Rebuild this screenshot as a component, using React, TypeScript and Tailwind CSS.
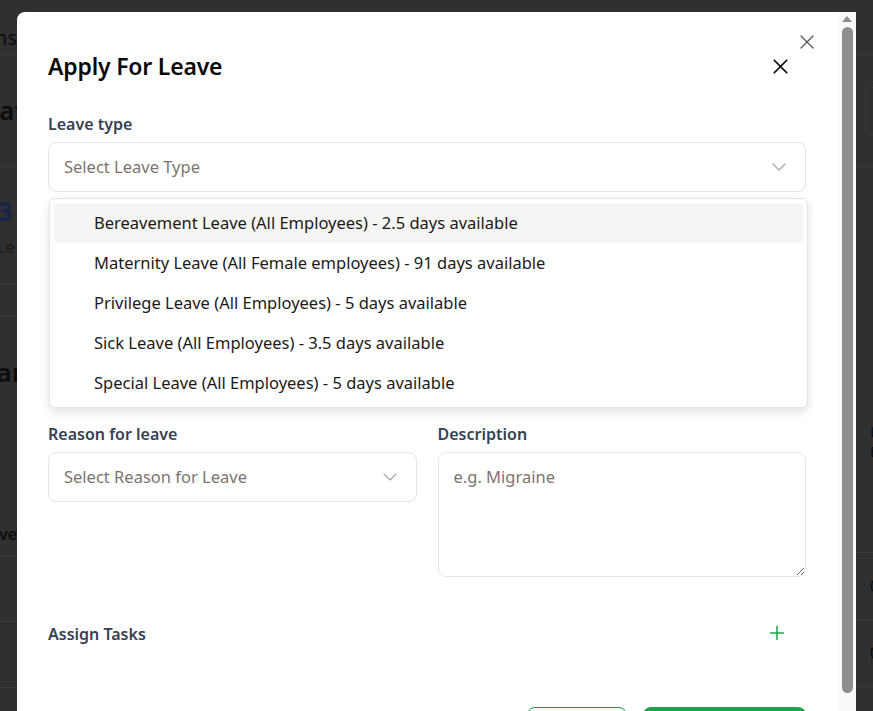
import React from 'react';
import { X, ChevronDown, Plus } from 'lucide-react';

const leaveTypes = [
    'Bereavement Leave (All Employees) - 2.5 days available',
    'Maternity Leave (All Female employees) - 91 days available',
    'Privilege Leave (All Employees) - 5 days available',
    'Sick Leave (All Employees) - 3.5 days available',
    'Special Leave (All Employees) - 5 days available',
];

const font = { fontFamily: '"Noto Sans", "Open Sans", Arial, sans-serif' };

const App: React.FC = () => {
    return (
        <div className="h-[711px] w-[873px] overflow-hidden bg-[#303030] flex font-['Noto_Sans',sans-serif]">
            {/* page behind the backdrop, left edge */}
            <div className="w-[17px] shrink-0 overflow-hidden">
                <div className="w-[120px] -ml-[103px] text-right text-[#0c0c0c]">
                    <div className="h-[55px] border-b border-[#3a3a3a] flex items-end justify-end pb-[2px] text-[20px] leading-[28px]">ns</div>
                    <div className="h-[112px] border-b border-[#3a3a3a] flex items-center justify-end text-[26px] font-semibold mr-[-8px]">at</div>
                    <div className="h-[118px] border-b border-[#3a3a3a] pt-[28px] pl-[100px] text-left">
                        <div className="text-[26px] leading-[32px] font-bold text-[#17234a] -ml-[14px]">13</div>
                        <div className="text-[16px] mt-[8px] text-[#1a1a1a]">Le</div>
                    </div>
                    <div className="h-[32px] border-b border-[#3a3a3a]" />
                    <div className="h-[240px] border-b border-[#3a3a3a] pt-[36px] text-[26px] font-semibold mr-[-6px]">
                        ar
                        <div className="text-[16px] mt-[130px] mr-[6px]">ve</div>
                    </div>
                    <div className="h-[65px] border-b border-[#3a3a3a]" />
                    <div className="h-[66px] border-b border-[#3a3a3a]" />
                </div>
            </div>

            {/* modal */}
            <div className="relative mt-[12px] w-[839px] h-[720px] shrink-0 bg-white rounded-tl-[8px] flex" style={font}>
                <button className="absolute right-[37px] top-[18px] text-[#555]">
                    <X className="w-[24px] h-[24px]" strokeWidth={1.3} />
                </button>

                <div className="flex-1 pl-[31px] pr-[32px] pt-[38px]">
                    <div className="flex items-center justify-between">
                        <h2 className="text-[23px] leading-[32px] font-semibold text-[#0a0a0a] tracking-[-0.2px]">Apply For Leave</h2>
                        <X className="w-[25px] h-[25px] mr-[13px] text-black" strokeWidth={1.6} />
                    </div>

                    <div className="relative mt-[30px]">
                        <label className="block text-[16px] leading-[24px] font-semibold text-[#374151]">Leave type</label>
                        <div className="mt-[6px] h-[50px] rounded-[8px] border border-[#e5e5e5] flex items-center justify-between pl-[15px] pr-[14px]">
                            <span className="text-[16.5px] text-[#7d7470] pt-[1px]">Select Leave Type</span>
                            <ChevronDown className="w-[24px] h-[24px] text-[#a8a29e]" strokeWidth={1.1} />
                        </div>

                        {/* open dropdown */}
                        <div className="absolute left-[1px] top-[86px] w-[759px] z-10 rounded-[6px] border border-[#e5e5e5] bg-white p-[4px] shadow-[0_4px_10px_rgba(0,0,0,0.12)]">
                            {leaveTypes.map((t, i) => (
                                <div
                                    key={t}
                                    className={`h-[40px] flex items-center pl-[40px] pt-[1px] rounded-[4px] text-[16.5px] text-[#1c1917] ${i === 0 ? 'bg-[#f5f5f4]' : ''}`}
                                >
                                    {t}
                                </div>
                            ))}
                        </div>

                        <div className="h-[230px]" />
                    </div>

                    <div className="grid grid-cols-2 gap-x-[21px]">
                        <div>
                            <label className="block text-[16px] leading-[24px] font-semibold text-[#374151]">Reason for leave</label>
                            <div className="mt-[6px] h-[50px] rounded-[8px] border border-[#e5e5e5] flex items-center justify-between pl-[15px] pr-[14px]">
                                <span className="text-[16.5px] text-[#7d7470] pt-[1px]">Select Reason for Leave</span>
                                <ChevronDown className="w-[24px] h-[24px] text-[#a8a29e]" strokeWidth={1.1} />
                            </div>
                        </div>
                        <div>
                            <label className="block text-[16px] leading-[24px] font-semibold text-[#374151]">Description</label>
                            <textarea
                                placeholder="e.g. Migraine"
                                className="mt-[6px] block w-full h-[125px] rounded-[8px] border border-[#e5e5e5] px-[15px] py-[12px] text-[16.5px] placeholder:text-[#7d7470] outline-none"
                            />
                        </div>
                    </div>

                    <div className="mt-[45px] flex items-center justify-between">
                        <span className="text-[16px] leading-[24px] font-semibold text-[#374151]">Assign Tasks</span>
                        <Plus className="w-[22px] h-[22px] mr-[18px] -mt-[3px] text-[#22a34a]" strokeWidth={1.7} />
                    </div>

                    <div className="mt-[61px] flex justify-end gap-[16px]">
                        <button className="w-[100px] h-[44px] rounded-[8px] border border-[#22a34a] text-[#16a34a] font-semibold">Cancel</button>
                        <button className="w-[163px] h-[44px] rounded-[8px] bg-[#1fa34a] text-white font-semibold">Apply</button>
                    </div>
                </div>

                {/* scrollbar */}
                <div className="w-[18px] shrink-0 bg-[#fafafa] flex flex-col items-center pt-[4px]">
                    <div className="w-0 h-0 border-l-[5px] border-r-[5px] border-b-[6px] border-l-transparent border-r-transparent border-b-[#8e8e8e]" />
                    <div className="mt-[5px] w-[11px] h-[666px] rounded-full bg-[#8e8e8e]" />
                </div>
            </div>

            {/* page behind the backdrop, right edge */}
            <div className="w-[17px] shrink-0 overflow-hidden text-[#0c0c0c]">
                <div className="h-[55px] border-b border-[#3a3a3a]" />
                <div className="h-[112px] border-b border-[#3a3a3a] pt-[32px] pl-[9px]">
                    <div className="w-[40px] h-[48px] rounded-[6px] border border-[#3c3c3c]" />
                </div>
                <div className="h-[386px] border-b border-[#3a3a3a] pt-[254px] pl-[14px] text-[15px] leading-[20px]">
                    <div>L</div>
                    <div>E</div>
                </div>
                <div className="h-[67px] border-b border-[#3a3a3a] flex items-center pl-[14px] text-[16px]">0</div>
                <div className="h-[67px] border-b border-[#3a3a3a] flex items-center pl-[14px] text-[16px]">0</div>
                <div className="h-[67px] border-b border-[#3a3a3a] flex items-center pl-[14px] text-[16px]">0</div>
            </div>
        </div>
    );
};

export default App;
